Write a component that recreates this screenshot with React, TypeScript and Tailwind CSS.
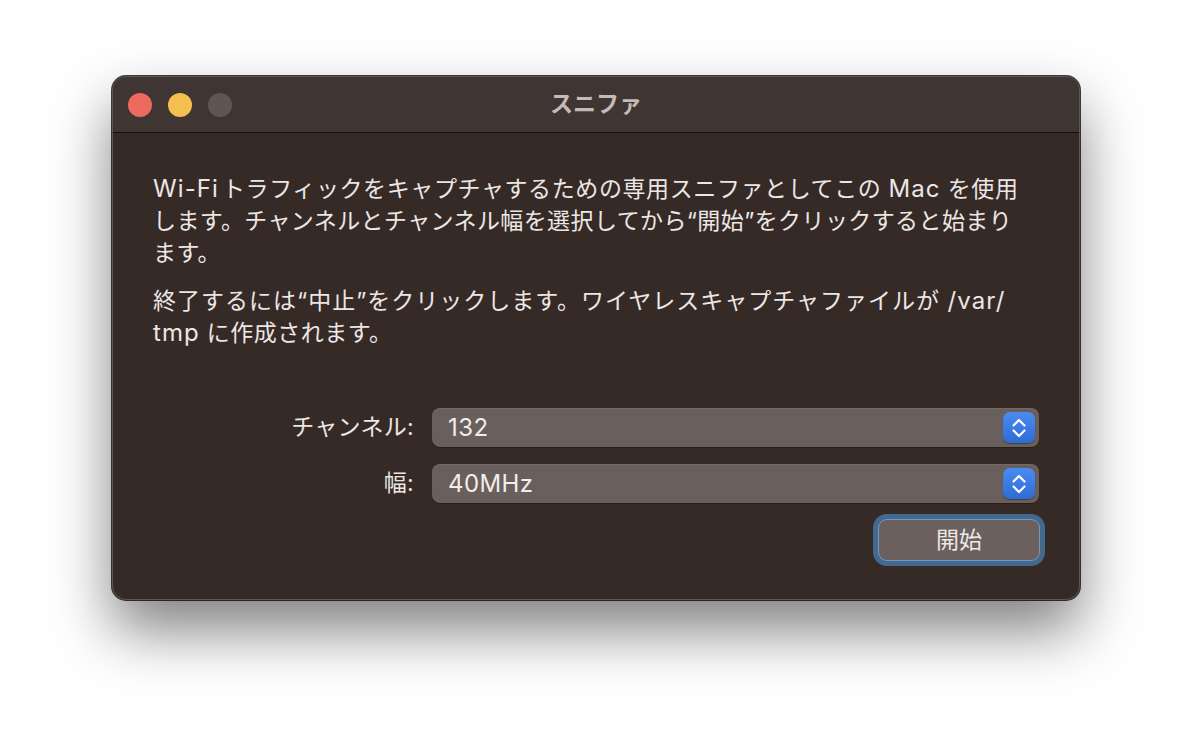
import React from "react";

const font = { fontFamily: 'Inter, "Noto Sans CJK JP", "Noto Sans", sans-serif' };

function Stepper() {
  return (
    <div className="flex h-[31px] w-[32px] items-center justify-center rounded-[7px] bg-gradient-to-b from-[#4a8cf2] to-[#2d6bd5] shadow-[0_1px_1px_rgba(0,0,0,0.35)]">
      <svg width="16" height="24" viewBox="0 0 16 24" fill="none">
        <path d="M2.5 9.5 L8 4 L13.5 9.5" stroke="#ffffff" strokeWidth="2.2" strokeLinecap="round" strokeLinejoin="round" />
        <path d="M2.5 14.5 L8 20 L13.5 14.5" stroke="#ffffff" strokeWidth="2.2" strokeLinecap="round" strokeLinejoin="round" />
      </svg>
    </div>
  );
}

function Select({ value }: { value: string }) {
  return (
    <div className="flex h-[39px] flex-1 items-center justify-between rounded-[8px] bg-[#695f5c] pl-[16px] pr-[4px] shadow-[inset_0_1px_0_rgba(255,255,255,0.08),0_1px_1px_rgba(0,0,0,0.3)]">
      <span className="text-[24px] leading-none tracking-[0.4px] text-[#f1edeb]">{value}</span>
      <Stepper />
    </div>
  );
}

function L({ children, extra = "" }: { children: React.ReactNode; extra?: string }) {
  return <span className={"text-[24px] tracking-[1.1px] " + extra}>{children}</span>;
}

export default function App() {
  return (
    <div className="min-h-[748px] w-[1192px] bg-white pl-[112px] pt-[76px]" style={font}>
      <div className="flex h-[524px] w-[968px] flex-col overflow-hidden rounded-[14px] border border-[#5f5653] bg-[#362a27] shadow-[0_0_0_1px_rgba(0,0,0,0.75),0_30px_60px_rgba(0,0,0,0.5)]">
        {/* title bar */}
        <div className="relative flex h-[56px] shrink-0 items-center border-b border-[#14100f] bg-[#3f3633] pl-[15px]">
          <div className="flex gap-[16px]">
            <div className="h-[24px] w-[24px] rounded-full bg-[#ee6a5f]" />
            <div className="h-[24px] w-[24px] rounded-full bg-[#f5bf4f]" />
            <div className="h-[24px] w-[24px] rounded-full bg-[#5f5653]" />
          </div>
          <div className="absolute inset-0 flex items-center justify-center">
            <span className="text-[23px] font-bold text-[#c4bbb8]">スニファ</span>
          </div>
        </div>
        {/* body */}
        <div className="flex flex-1 flex-col px-[40px] pt-[40px]">
          <div className="flex flex-col whitespace-nowrap text-[23px] leading-[32px] text-[#ebe7e5]">
            <span className="tracking-[0.6px]">
              <L extra="mr-[3px]">Wi-Fi</L>トラフィックをキャプチャするための専用スニファとしてこの <L>Mac</L> を使用
            </span>
            <span className="tracking-[0.4px]">
              します。チャンネルとチャンネル幅を選択してから“開始”をクリックすると始まり
            </span>
            <span className="tracking-[0.4px]">ます。</span>
          </div>
          <div className="mt-[16px] flex flex-col whitespace-nowrap text-[23px] leading-[32px] text-[#ebe7e5]">
            <span className="tracking-[1px]">
              終了するには“中止”をクリックします。ワイヤレスキャプチャファイルが <L>/var/</L>
            </span>
            <span className="tracking-[0.5px]">
              <L>tmp</L> に作成されます。
            </span>
          </div>
          <div className="mt-[59px] flex flex-col gap-[17px]">
            <div className="flex items-center">
              <div className="w-[262px] pr-[1px] text-right text-[23px] tracking-[0.3px] text-[#ebe7e5]">チャンネル:</div>
              <div className="ml-[17px] flex flex-1">
                <Select value="132" />
              </div>
            </div>
            <div className="flex items-center">
              <div className="w-[262px] pr-[1px] text-right text-[23px] tracking-[0.3px] text-[#ebe7e5]">幅:</div>
              <div className="ml-[17px] flex flex-1">
                <Select value="40MHz" />
              </div>
            </div>
            <div className="flex justify-end">
              <button className="flex h-[40px] w-[160px] items-center justify-center rounded-[8px] bg-[#6b605d] text-[23px] text-[#ebe7e5] shadow-[0_0_0_1px_#7398c2,0_0_0_6px_#44698f]">
                開始
              </button>
            </div>
          </div>
        </div>
      </div>
    </div>
  );
}
